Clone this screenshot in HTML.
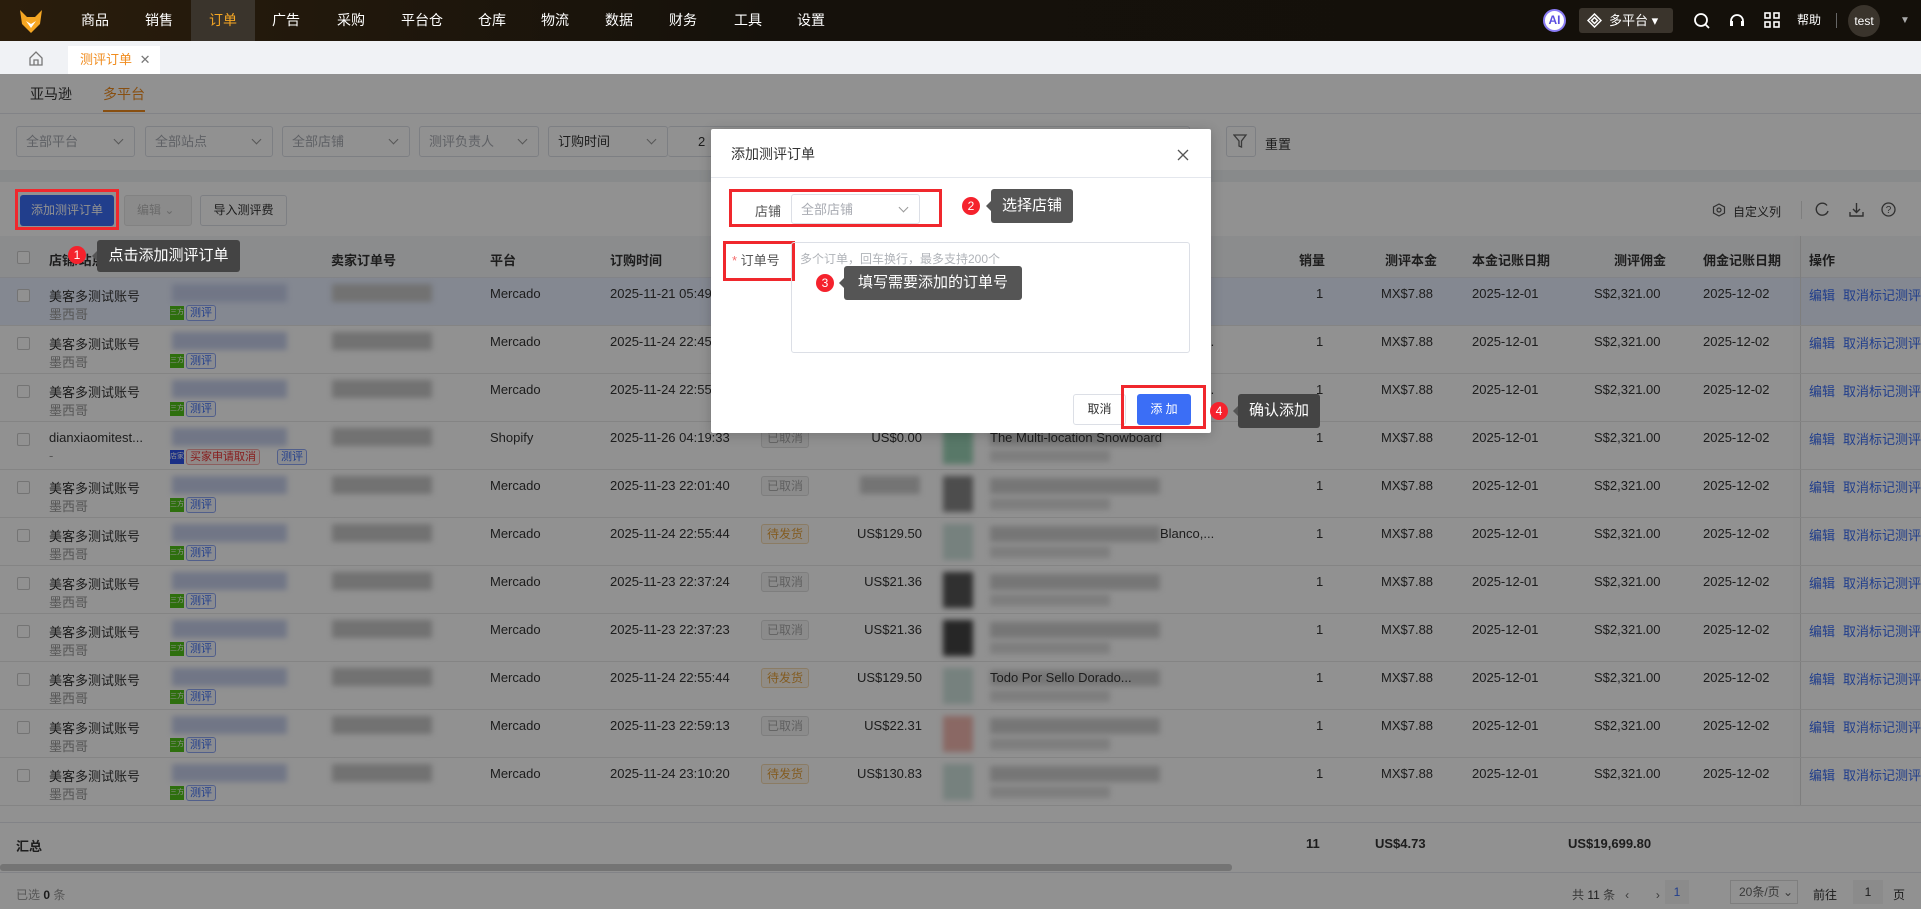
<!DOCTYPE html>
<html><head><meta charset="utf-8"><style>
*{box-sizing:border-box;margin:0;padding:0}
body{width:1921px;height:909px;overflow:hidden;position:relative;background:#fff;font-family:"Liberation Sans","Noto Sans CJK SC",sans-serif;font-size:13px;color:#333}
.a{position:absolute;white-space:nowrap}
.nav{left:0;top:0;width:1921px;height:41px;background:linear-gradient(90deg,#2a1d0c,#15110b 40%,#14100a)}
.nav .m{position:absolute;top:0;height:41px;line-height:41px;color:#fff;font-size:14px}
.sel{position:absolute;height:31px;border:1px solid #dcdfe6;border-radius:3px;background:#fff;color:#a8abb2;font-size:13px;line-height:29px;padding-left:9px}
.sel:after{content:"";position:absolute;right:12px;top:9px;width:6px;height:6px;border-right:1px solid #999;border-bottom:1px solid #999;transform:rotate(45deg)}
.th{position:absolute;top:250px;font-weight:bold;font-size:13px;color:#333}
.cell{position:absolute;font-size:13px;color:#333}
.g{color:#999}
.blur{position:absolute;filter:blur(3px)}
.tag{position:absolute;height:16px;line-height:14px;font-size:11px;border:1px solid #8fa7f5;color:#3b6ef6;border-radius:3px;padding:0 3px;background:#f3f6ff}
.st{position:absolute;height:20px;line-height:18px;font-size:12px;padding:0 5px;border-radius:3px;border:1px solid #ddd;background:#f4f4f5;color:#aaa}
.st.w{background:#fdf6ec;border-color:#f5dab1;color:#e6a23c}
.link{color:#3b6ef6}
.badge{position:absolute;width:18px;height:18px;border-radius:50%;background:#f5222d;color:#fff;font-size:12px;line-height:18px;text-align:center}
.tip{position:absolute;background:#555;color:#fff;font-size:15px;border-radius:3px;text-align:center}
.tip:before{content:"";position:absolute;left:-5px;top:50%;margin-top:-5px;border:5px solid transparent;border-left:0;border-right-color:#555}
.rb{position:absolute;border:3px solid #f0282d}
</style></head><body>

<div class="a nav">
 <svg style="position:absolute;left:18px;top:8px" width="26" height="26" viewBox="0 0 26 26"><path d="M2 2 L9 9 L17 9 L24 2 L22 16 L13 25 L4 16Z" fill="#f5a623"/><path d="M8 13 L13 20 L18 13 L13 16Z" fill="#fff"/></svg>
 <div style="position:absolute;left:191px;top:0;width:64px;height:41px;background:#3a342c"></div>
 <div class="m" style="left:81px">商品</div><div class="m" style="left:145px">销售</div><div class="m" style="left:209px;color:#f5a623">订单</div><div class="m" style="left:272px">广告</div><div class="m" style="left:337px">采购</div><div class="m" style="left:401px">平台仓</div><div class="m" style="left:478px">仓库</div><div class="m" style="left:541px">物流</div><div class="m" style="left:605px">数据</div><div class="m" style="left:669px">财务</div><div class="m" style="left:734px">工具</div><div class="m" style="left:797px">设置</div>
 <div style="position:absolute;left:1543px;top:9px;width:23px;height:23px;border-radius:50%;background:#fff;border:2px solid #8a7cf5;color:#5b4ee0;font-weight:bold;font-size:12px;text-align:center;line-height:19px">AI</div>
 <div style="position:absolute;left:1579px;top:8px;width:94px;height:25px;border-radius:3px;background:#3a342c;color:#fff;font-size:13px;line-height:25px;padding-left:30px">多平台 ▾</div>
 <svg style="position:absolute;left:1587px;top:13px" width="15" height="15" viewBox="0 0 15 15"><path d="M7.5 1 L14 7.5 L7.5 14 L1 7.5Z M7.5 4.5 L10.5 7.5 L7.5 10.5 L4.5 7.5Z" fill="none" stroke="#fff" stroke-width="1.5"/></svg>
 <svg style="position:absolute;left:1693px;top:12px" width="18" height="18" viewBox="0 0 18 18"><circle cx="8" cy="8" r="6" fill="none" stroke="#fff" stroke-width="1.8"/><path d="M12.5 12.5L16 16" stroke="#fff" stroke-width="1.8"/></svg>
 <svg style="position:absolute;left:1728px;top:11px" width="18" height="19" viewBox="0 0 18 19"><path d="M3 10 A6 6 0 0 1 15 10" fill="none" stroke="#fff" stroke-width="1.8"/><rect x="2" y="10" width="3" height="5" fill="#fff"/><rect x="13" y="10" width="3" height="5" fill="#fff"/></svg>
 <svg style="position:absolute;left:1764px;top:12px" width="16" height="16" viewBox="0 0 16 16" fill="none" stroke="#fff" stroke-width="1.6"><rect x="1" y="1" width="5" height="5"/><rect x="10" y="1" width="5" height="5"/><rect x="1" y="10" width="5" height="5"/><rect x="10" y="10" width="5" height="5"/></svg>
 <div style="position:absolute;left:1797px;top:0;line-height:41px;color:#fff;font-size:12px">帮助</div>
 <div style="position:absolute;left:1836px;top:13px;width:1px;height:15px;background:#666"></div>
 <div style="position:absolute;left:1848px;top:5px;width:32px;height:32px;border-radius:50%;background:#3a342c;color:#fff;font-size:12px;text-align:center;line-height:32px">test</div>
 <div style="position:absolute;left:1900px;top:0;line-height:41px;color:#aaa;font-size:10px">▼</div>
</div>

<div class="a" style="left:0;top:41px;width:1921px;height:33px;background:#f0f2f5"></div>
<svg class="a" style="left:29px;top:51px" width="14" height="15" viewBox="0 0 14 15"><path d="M1 7 L7 1 L13 7 V14 H1Z M5 14 V9 H9 V14" fill="none" stroke="#777" stroke-width="1.3"/></svg>
<div class="a" style="left:68px;top:46px;width:92px;height:28px;background:#fff;color:#f08c1e;font-size:13px;line-height:28px;padding-left:12px">测评订单 <span style="color:#777;margin-left:4px">✕</span></div>

<div class="a" style="left:30px;top:84px;font-size:14px;color:#333">亚马逊</div>
<div class="a" style="left:103px;top:84px;font-size:14px;color:#f08c1e">多平台</div>
<div class="a" style="left:103px;top:110px;width:42px;height:2px;background:#f08c1e"></div>
<div class="a" style="left:0;top:113px;width:1921px;height:1px;background:#e4e7ed"></div>
<div class="sel" style="left:16px;top:126px;width:119px">全部平台</div>
<div class="sel" style="left:145px;top:126px;width:128px">全部站点</div>
<div class="sel" style="left:282px;top:126px;width:128px">全部店铺</div>
<div class="sel" style="left:419px;top:126px;width:120px">测评负责人</div>
<div class="sel" style="left:548px;top:126px;width:120px;color:#333">订购时间</div>
<div class="sel" style="left:668px;top:126px;width:522px;border-left:none;padding-left:30px;color:#333">2</div>
<div class="a" style="left:1226px;top:126px;width:30px;height:31px;border:1px solid #dcdfe6;border-radius:3px;background:#fff"></div>
<svg class="a" style="left:1233px;top:134px" width="16" height="15" viewBox="0 0 16 15"><path d="M1 1H13L8.5 7V13L6 12V7Z" fill="none" stroke="#666" stroke-width="1.3"/></svg>
<div class="a" style="left:1265px;top:134px;font-size:13px">重置</div>
<div class="a" style="left:0;top:170px;width:1921px;height:12px;background:#f0f2f5"></div>

<div class="a" style="left:20px;top:195px;width:94px;height:31px;background:#3b6ef6;border-radius:3px;color:#fff;font-size:12px;line-height:31px;text-align:center">添加测评订单</div>
<div class="a" style="left:124px;top:195px;width:68px;height:31px;background:#f5f5f5;border:1px solid #e4e4e4;border-radius:3px;color:#bbb;font-size:12px;line-height:29px;padding-left:12px">编辑 ⌄</div>
<div class="a" style="left:200px;top:195px;width:87px;height:31px;background:#fff;border:1px solid #dcdfe6;border-radius:3px;font-size:12px;line-height:29px;text-align:center">导入测评费</div>
<svg class="a" style="left:1712px;top:203px" width="14" height="14" viewBox="0 0 14 14"><path d="M7 1 L12.5 4 V10 L7 13 L1.5 10 V4Z" fill="none" stroke="#555" stroke-width="1.2"/><circle cx="7" cy="7" r="2" fill="none" stroke="#555" stroke-width="1.2"/></svg>
<div class="a" style="left:1733px;top:203px;font-size:12px">自定义列</div>
<div class="a" style="left:1801px;top:201px;width:1px;height:18px;background:#ddd"></div>
<svg class="a" style="left:1815px;top:202px" width="15" height="15" viewBox="0 0 15 15"><path d="M12 3.5 A6 6 0 1 0 13 9" fill="none" stroke="#555" stroke-width="1.4"/></svg>
<svg class="a" style="left:1849px;top:202px" width="15" height="15" viewBox="0 0 15 15" fill="none" stroke="#555" stroke-width="1.4"><path d="M7.5 1V10M4 7L7.5 10.5L11 7M1 10V14H14V10"/></svg>
<svg class="a" style="left:1881px;top:202px" width="15" height="15" viewBox="0 0 15 15"><circle cx="7.5" cy="7.5" r="6.5" fill="none" stroke="#555" stroke-width="1.3"/><text x="7.5" y="11" font-size="10" text-anchor="middle" fill="#555" font-family="Liberation Sans">?</text></svg>

<div class="a" style="left:0;top:236px;width:1921px;height:42px;background:#f5f6f8;border-bottom:1px solid #e4e7ed"></div>
<div class="a" style="left:0;top:278px;width:1921px;height:48px;background:#e8efff"></div>
<div class="a" style="left:17px;top:251px;width:13px;height:13px;border:1px solid #ccc;background:#fff;border-radius:2px"></div>
<div class="th" style="left:49px">店铺/站点</div><div class="th" style="left:331px">卖家订单号</div><div class="th" style="left:490px">平台</div><div class="th" style="left:610px">订购时间</div>
<div class="th" style="left:1299px">销量</div><div class="th" style="left:1385px">测评本金</div><div class="th" style="left:1472px">本金记账日期</div><div class="th" style="left:1614px">测评佣金</div><div class="th" style="left:1703px">佣金记账日期</div><div class="th" style="left:1809px">操作</div>
<div class="a" style="left:1800px;top:236px;width:1px;height:570px;background:#ddd;box-shadow:-3px 0 6px rgba(0,0,0,.08)"></div>

<div id="rows"></div>
<script>
var R=[
["美客多测试账号","墨西哥","Mercado","2025-11-21 05:49:12","","",""],
["美客多测试账号","墨西哥","Mercado","2025-11-24 22:45:02","","","Blanco,..."],
["美客多测试账号","墨西哥","Mercado","2025-11-24 22:55:44","","","Blanco,..."],
["dianxiaomitest...","-","Shopify","2025-11-26 04:19:33","已取消","US$0.00","The Multi-location Snowboard"],
["美客多测试账号","墨西哥","Mercado","2025-11-23 22:01:40","已取消","",""],
["美客多测试账号","墨西哥","Mercado","2025-11-24 22:55:44","待发货","US$129.50","Blanco,..."],
["美客多测试账号","墨西哥","Mercado","2025-11-23 22:37:24","已取消","US$21.36",""],
["美客多测试账号","墨西哥","Mercado","2025-11-23 22:37:23","已取消","US$21.36",""],
["美客多测试账号","墨西哥","Mercado","2025-11-24 22:55:44","待发货","US$129.50","Todo Por Sello Dorado..."],
["美客多测试账号","墨西哥","Mercado","2025-11-23 22:59:13","已取消","US$22.31",""],
["美客多测试账号","墨西哥","Mercado","2025-11-24 23:10:20","待发货","US$130.83",""]];
var h="";
R.forEach(function(r,i){var t=278+48*i;
h+='<div class="a" style="left:0;top:'+(t+47)+'px;width:1921px;height:1px;background:#e8e8e8"></div>';
h+='<div class="a" style="left:17px;top:'+(t+11)+'px;width:13px;height:13px;border:1px solid #ccc;background:#fff;border-radius:2px"></div>';
h+='<div class="cell" style="left:49px;top:'+(t+8)+'px">'+r[0]+'</div><div class="cell g" style="left:49px;top:'+(t+26)+'px">'+r[1]+'</div>';
h+='<div class="blur" style="left:172px;top:'+(t+6)+'px;width:115px;height:18px;background:#c7d0ec"></div>';
h+='<div class="blur" style="left:332px;top:'+(t+6)+'px;width:100px;height:18px;background:#c8c8c8"></div>';
if(i==3){h+='<div class="a" style="left:170px;top:'+(t+28)+'px;width:14px;height:14px;background:#2f54eb;color:#fff;font-size:7px;line-height:14px">店家</div><div class="tag" style="left:186px;top:'+(t+27)+'px;border-color:#f5a5a5;color:#e33;background:#fff1f0">买家申请取消</div><div class="tag" style="left:277px;top:'+(t+27)+'px">测评</div>';}
else{h+='<div class="a" style="left:170px;top:'+(t+28)+'px;width:14px;height:14px;background:#52c41a;color:#fff;font-size:7px;line-height:14px">三方</div><div class="tag" style="left:186px;top:'+(t+27)+'px">测评</div>';}
h+='<div class="cell" style="left:490px;top:'+(t+8)+'px">'+r[2]+'</div><div class="cell" style="left:610px;top:'+(t+8)+'px">'+r[3]+'</div>';
if(r[4])h+='<div class="st'+(r[4]=="待发货"?" w":"")+'" style="left:761px;top:'+(t+6)+'px">'+r[4]+'</div>';
if(r[5])h+='<div class="cell" style="left:822px;width:100px;text-align:right;top:'+(t+8)+'px">'+r[5]+'</div>';
else h+='<div class="blur" style="left:860px;top:'+(t+6)+'px;width:60px;height:18px;background:#ccc"></div>';
h+='<div class="blur" style="left:943px;top:'+(t+6)+'px;width:30px;height:36px;background:'+(["#cfe3dd","#ddd","#bbb","#9cd4b8","#888","#cfe3dd","#555","#444","#cfe3dd","#f2b8b0","#cfe3dd"][i])+'"></div>';
h+='<div class="blur" style="left:990px;top:'+(t+8)+'px;width:170px;height:16px;background:#d0d0d0"></div><div class="blur" style="left:990px;top:'+(t+28)+'px;width:120px;height:12px;background:#ddd"></div>';
if(r[6])h+='<div class="cell" style="left:'+(r[6].length>12?990:1160)+'px;top:'+(t+8)+'px">'+r[6]+'</div>';
h+='<div class="cell" style="left:1316px;top:'+(t+8)+'px">1</div><div class="cell" style="left:1381px;top:'+(t+8)+'px">MX$7.88</div><div class="cell" style="left:1472px;top:'+(t+8)+'px">2025-12-01</div><div class="cell" style="left:1594px;top:'+(t+8)+'px">S$2,321.00</div><div class="cell" style="left:1703px;top:'+(t+8)+'px">2025-12-02</div>';
h+='<div class="cell link" style="left:1809px;top:'+(t+7)+'px">编辑</div><div class="cell link" style="left:1843px;top:'+(t+7)+'px">取消标记测评</div>';
});
document.getElementById("rows").innerHTML=h;
</script>
<div class="a" style="left:0;top:822px;width:1921px;height:1px;background:#e4e7ed"></div>
<div class="a" style="left:16px;top:836px;font-weight:bold">汇总</div>
<div class="a" style="left:1306px;top:836px;font-weight:bold">11</div>
<div class="a" style="left:1375px;top:836px;font-weight:bold">US$4.73</div>
<div class="a" style="left:1568px;top:836px;font-weight:bold">US$19,699.80</div>
<div class="a" style="left:0;top:864px;width:1232px;height:7px;background:#ccc;border-radius:3px"></div>
<div class="a" style="left:0;top:872px;width:1921px;height:1px;background:#e4e7ed"></div>
<div class="a g" style="left:16px;top:886px;font-size:12px">已选 <b style="color:#333">0</b> 条</div>
<div class="a" style="left:1572px;top:886px;font-size:12px;color:#666">共 <span style="color:#333">11</span> 条 &nbsp;&nbsp;‹&nbsp;&nbsp;&nbsp;&nbsp;&nbsp;&nbsp;&nbsp;&nbsp;›</div>
<div class="a" style="left:1665px;top:880px;width:24px;height:24px;background:#f4f4f5;color:#3b6ef6;text-align:center;line-height:24px;font-size:12px">1</div>
<div class="a" style="left:1730px;top:880px;width:68px;height:24px;border:1px solid #ddd;font-size:12px;line-height:22px;padding-left:8px;color:#666">20条/页 ⌄</div>
<div class="a" style="left:1813px;top:886px;font-size:12px">前往</div>
<div class="a" style="left:1853px;top:880px;width:30px;height:24px;background:#f4f4f5;text-align:center;line-height:24px;font-size:12px">1</div>
<div class="a" style="left:1893px;top:886px;font-size:12px">页</div>

<div class="a" style="left:0;top:74px;width:1921px;height:835px;background:rgba(0,0,0,.43)"></div>

<div class="rb" style="left:15px;top:189px;width:104px;height:41px"></div>
<div class="badge" style="left:68px;top:246px">1</div>
<div class="tip" style="left:97px;top:240px;width:143px;height:32px;line-height:32px;background:#444">点击添加测评订单</div>

<div class="a" style="left:711px;top:129px;width:500px;height:304px;background:#fff;border-radius:2px;box-shadow:0 2px 12px rgba(0,0,0,.2)"></div>
<div class="a" style="left:731px;top:144px;font-size:14px;color:#333">添加测评订单</div>
<svg class="a" style="left:1177px;top:149px" width="12" height="12" viewBox="0 0 12 12"><path d="M1 1L11 11M11 1L1 11" stroke="#555" stroke-width="1.3"/></svg>
<div class="a" style="left:711px;top:177px;width:500px;height:1px;background:#e4e7ed"></div>
<div class="a" style="left:755px;top:201px;font-size:13px;color:#555">店铺</div>
<div class="sel" style="left:791px;top:194px;width:129px;height:30px">全部店铺</div>
<div class="rb" style="left:729px;top:189px;width:213px;height:38px"></div>
<div class="a" style="left:732px;top:250px;font-size:13px;color:#555"><span style="color:#f56c6c">*</span> 订单号</div>
<div class="rb" style="left:723px;top:241px;width:72px;height:40px"></div>
<div class="a" style="left:791px;top:242px;width:399px;height:111px;border:1px solid #dcdfe6;border-radius:3px"></div>
<div class="a" style="left:800px;top:250px;font-size:12px;color:#b0b3b8">多个订单，回车换行，最多支持200个</div>
<div class="a" style="left:1073px;top:394px;width:53px;height:31px;border:1px solid #dcdfe6;border-radius:3px;font-size:12px;line-height:29px;text-align:center;background:#fff">取消</div>
<div class="a" style="left:1137px;top:394px;width:54px;height:31px;background:#3b6ef6;border-radius:3px;color:#fff;font-size:12px;line-height:31px;text-align:center">添 加</div>
<div class="rb" style="left:1121px;top:385px;width:85px;height:44px"></div>

<div class="badge" style="left:962px;top:197px">2</div>
<div class="tip" style="left:991px;top:189px;width:82px;height:34px;line-height:34px">选择店铺</div>
<div class="badge" style="left:816px;top:274px">3</div>
<div class="tip" style="left:844px;top:266px;width:178px;height:34px;line-height:34px">填写需要添加的订单号</div>
<div class="badge" style="left:1210px;top:402px">4</div>
<div class="tip" style="left:1238px;top:394px;width:82px;height:34px;line-height:34px;background:#444">确认添加</div>
</body></html>
